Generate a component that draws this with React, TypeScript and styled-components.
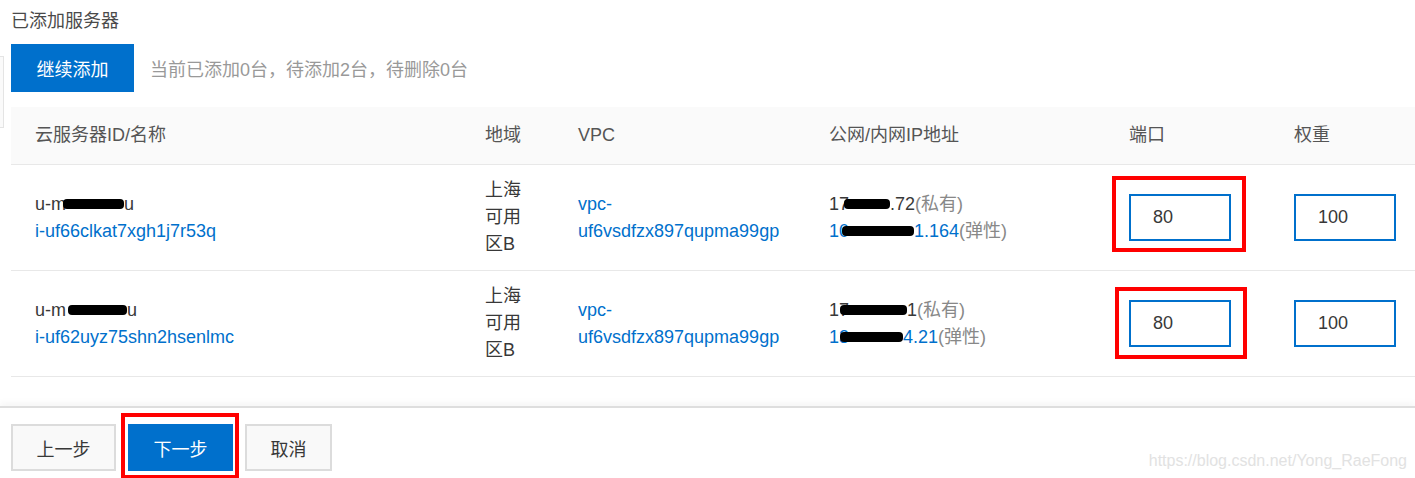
import React from "react";
import styled, { createGlobalStyle } from "styled-components";

const GlobalStyle = createGlobalStyle`
  html, body {
    margin: 0;
    padding: 0;
    background: #fff;
    overflow: hidden;
  }
  body {
    font-family: "Liberation Sans", "Noto Sans CJK SC", sans-serif;
    font-size: 18px;
    color: #383838;
  }
`;

const BLUE = "#0070cc";
const COLUMNS = "450px 93px 251px 300px 165px 1fr";

const Page = styled.div`
  position: relative;
  width: 1415px;
  height: 478px;
`;

const EdgeMark = styled.div`
  position: absolute;
  left: 0;
  top: 56px;
  width: 3px;
  height: 70px;
  background: #fafafa;
  border: 1px solid #e4e4e4;
  border-left: none;
`;

const Content = styled.div`
  padding-left: 11px;
`;

const Title = styled.h3`
  margin: 0;
  padding-top: 8px;
  font-size: 18px;
  font-weight: normal;
  line-height: 26px;
  color: #4a4a4a;
`;

const Toolbar = styled.div`
  display: flex;
  align-items: center;
  gap: 16px;
  margin-top: 10px;
  height: 48px;
`;

const AddButton = styled.button`
  height: 48px;
  padding: 0 25px;
  min-width: 123px;
  border: none;
  background: ${BLUE};
  color: #fff;
  font: inherit;
  cursor: pointer;
`;

const Summary = styled.span`
  color: #999;
`;

const Table = styled.div`
  margin-top: 15px;
`;

const HeadRow = styled.div`
  display: grid;
  grid-template-columns: ${COLUMNS};
  height: 57px;
  align-items: center;
  background: #fafafa;
  border-bottom: 1px solid #e8e8e8;
  color: #555;
`;

const Row = styled.div`
  display: grid;
  grid-template-columns: ${COLUMNS};
  height: 105px;
  align-items: center;
  border-bottom: 1px solid #e8e8e8;
`;

const Cell = styled.div`
  padding: 0 24px;
  line-height: 27px;
`;

const Line = styled.div<{ $tone?: "link" | "text" }>`
  color: ${({ $tone }) => ($tone === "link" ? BLUE : "#383838")};
  white-space: nowrap;
`;

const Link = styled.a`
  color: ${BLUE};
  text-decoration: none;
`;

const Hint = styled.span`
  color: #888;
`;

const Redact = styled.span<{ $w: number; $shift: number }>`
  display: inline-block;
  width: ${({ $w }) => $w}px;
  height: 10px;
  margin-left: ${({ $shift }) => -$shift}px;
  background: #000;
  border-radius: 4px;
  vertical-align: middle;
  position: relative;
  top: -1px;
`;

const Annotated = styled.span`
  position: relative;
  display: inline-block;
`;

const RedMark = styled.span<{
  $t: number;
  $l: number;
  $r: number;
  $b: number;
}>`
  position: absolute;
  top: ${({ $t }) => -$t}px;
  left: ${({ $l }) => -$l}px;
  right: ${({ $r }) => -$r}px;
  bottom: ${({ $b }) => -$b}px;
  border: 4px solid #ff0000;
  pointer-events: none;
`;

const NumberInput = styled.input`
  display: block;
  box-sizing: border-box;
  width: 102px;
  height: 47px;
  padding: 0 0 0 22px;
  border: 2px solid ${BLUE};
  font: inherit;
  color: #383838;
  background: #fff;
  outline: none;
`;

const Footer = styled.div`
  margin-top: 29px;
  border-top: 2px solid #dedede;
  box-shadow: 0 -4px 6px rgba(0, 0, 0, 0.035);
  padding: 16px 0 0 11px;
  display: flex;
  gap: 12px;
`;

const StepButton = styled.button<{ $primary?: boolean }>`
  box-sizing: border-box;
  height: 47px;
  padding: 0 23.5px;
  border: 2px solid ${({ $primary }) => ($primary ? BLUE : "#dcdcdc")};
  background: ${({ $primary }) => ($primary ? BLUE : "#f9f9f9")};
  color: ${({ $primary }) => ($primary ? "#fff" : "#383838")};
  font: inherit;
  cursor: pointer;
`;

const Watermark = styled.div`
  position: absolute;
  right: 8px;
  bottom: 8px;
  font-family: "Liberation Sans", sans-serif;
  font-size: 16px;
  color: #e2e2e2;
`;

type Mark = { t: number; l: number; r: number; b: number };

type Server = {
  name: [string, number, number, string];
  id: string;
  privIp: [string, number, number, string];
  pubIp: [string, number, number, string];
  portMark: Mark;
};

const servers: Server[] = [
  {
    name: ["u-m", 61, 3, "u"],
    id: "i-uf66clkat7xgh1j7r53q",
    privIp: ["17", 46, 5, ".72"],
    pubIp: ["10", 72, 7, "1.164"],
    portMark: { t: 18, l: 17, r: 15, b: 11 },
  },
  {
    name: ["u-m", 59, -2, "u"],
    id: "i-uf62uyz75shn2hsenlmc",
    privIp: ["17", 67, 9, "1"],
    pubIp: ["13", 63, 9, "4.21"],
    portMark: { t: 13, l: 14, r: 16, b: 12 },
  },
];

const Masked: React.FC<{ parts: [string, number, number, string] }> = ({
  parts,
}) => (
  <>
    {parts[0]}
    <Redact $w={parts[1]} $shift={parts[2]} />
    {parts[3]}
  </>
);

export default function App() {
  return (
    <>
      <GlobalStyle />
      <Page>
        <EdgeMark />
        <Content>
          <Title>已添加服务器</Title>
          <Toolbar>
            <AddButton>继续添加</AddButton>
            <Summary>当前已添加0台，待添加2台，待删除0台</Summary>
          </Toolbar>

          <Table>
            <HeadRow>
              <Cell>云服务器ID/名称</Cell>
              <Cell>地域</Cell>
              <Cell>VPC</Cell>
              <Cell>公网/内网IP地址</Cell>
              <Cell>端口</Cell>
              <Cell>权重</Cell>
            </HeadRow>
            {servers.map((s) => (
              <Row key={s.id}>
                <Cell>
                  <Line>
                    <Masked parts={s.name} />
                  </Line>
                  <Line>
                    <Link href="#">{s.id}</Link>
                  </Line>
                </Cell>
                <Cell>上海可用区B</Cell>
                <Cell>
                  <Link href="#">vpc-uf6vsdfzx897qupma99gp</Link>
                </Cell>
                <Cell>
                  <Line>
                    <Masked parts={s.privIp} />
                    <Hint>(私有)</Hint>
                  </Line>
                  <Line $tone="link">
                    <Masked parts={s.pubIp} />
                    <Hint>(弹性)</Hint>
                  </Line>
                </Cell>
                <Cell>
                  <Annotated>
                    <NumberInput readOnly value="80" />
                    <RedMark
                      $t={s.portMark.t}
                      $l={s.portMark.l}
                      $r={s.portMark.r}
                      $b={s.portMark.b}
                    />
                  </Annotated>
                </Cell>
                <Cell>
                  <NumberInput readOnly value="100" />
                </Cell>
              </Row>
            ))}
          </Table>
        </Content>

        <Footer>
          <StepButton>上一步</StepButton>
          <Annotated>
            <StepButton $primary>下一步</StepButton>
            <RedMark $t={11} $l={7} $r={6} $b={8} />
          </Annotated>
          <StepButton>取消</StepButton>
        </Footer>

        <Watermark>https://blog.csdn.net/Yong_RaeFong</Watermark>
      </Page>
    </>
  );
}
